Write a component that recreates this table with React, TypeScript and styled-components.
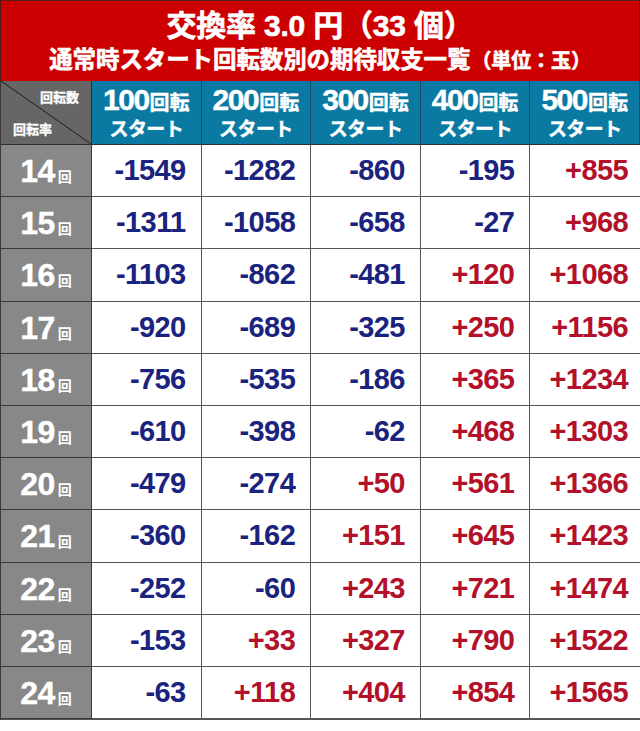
import React from "react";
import styled, { createGlobalStyle } from "styled-components";

const GlobalStyle = createGlobalStyle`
  html, body {
    margin: 0;
    padding: 0;
    background: #ffffff;
  }
  body {
    font-family: "Liberation Sans", "Noto Sans CJK JP", sans-serif;
  }
`;

const starts = [100, 200, 300, 400, 500];

const rows: { rate: number; values: number[] }[] = [
  { rate: 14, values: [-1549, -1282, -860, -195, 855] },
  { rate: 15, values: [-1311, -1058, -658, -27, 968] },
  { rate: 16, values: [-1103, -862, -481, 120, 1068] },
  { rate: 17, values: [-920, -689, -325, 250, 1156] },
  { rate: 18, values: [-756, -535, -186, 365, 1234] },
  { rate: 19, values: [-610, -398, -62, 468, 1303] },
  { rate: 20, values: [-479, -274, 50, 561, 1366] },
  { rate: 21, values: [-360, -162, 151, 645, 1423] },
  { rate: 22, values: [-252, -60, 243, 721, 1474] },
  { rate: 23, values: [-153, 33, 327, 790, 1522] },
  { rate: 24, values: [-63, 118, 404, 854, 1565] },
];

const format = (v: number) => (v > 0 ? `+${v}` : `${v}`);

const App: React.FC = () => {
  return (
    <Page>
      <GlobalStyle />
      <TitleBox>
        <MainTitle>交換率 3.0 円（33 個）</MainTitle>
        <SubTitle>
          通常時スタート回転数別の期待収支一覧
          <Unit>（単位：玉）</Unit>
        </SubTitle>
      </TitleBox>
      <Table>
        <Corner>
          <CornerTop>回転数</CornerTop>
          <CornerBottom>回転率</CornerBottom>
        </Corner>
        {starts.map((s) => (
          <HeadCell key={s}>
            <HeadLine>
              <HeadNum>{s}</HeadNum>
              <HeadKanji>回転</HeadKanji>
            </HeadLine>
            <HeadSub>スタート</HeadSub>
          </HeadCell>
        ))}
        {rows.map((r) => (
          <React.Fragment key={r.rate}>
            <RateCell>
              <RateNum>{r.rate}</RateNum>
              <RateUnit>回</RateUnit>
            </RateCell>
            {r.values.map((v, i) => (
              <ValueCell key={i} $plus={v > 0}>
                {format(v)}
              </ValueCell>
            ))}
          </React.Fragment>
        ))}
      </Table>
    </Page>
  );
};

const Page = styled.div`
  width: 640px;
  height: 731px;
  background: #ffffff;
  overflow: hidden;
`;

const TitleBox = styled.div`
  height: 81px;
  box-sizing: border-box;
  background: #cc0000;
  border: 1px solid #5a1a1a;
  border-bottom: none;
  display: flex;
  flex-direction: column;
  align-items: center;
  justify-content: center;
  padding-top: 3px;
  color: #ffffff;
  font-weight: bold;
  -webkit-text-stroke: 0.6px #ffffff;
`;

const MainTitle = styled.div`
  font-size: 30px;
  line-height: 36px;
  letter-spacing: -0.2px;
`;

const SubTitle = styled.div`
  font-size: 23.5px;
  line-height: 32px;
  letter-spacing: -0.1px;
  display: flex;
  align-items: baseline;
`;

const Unit = styled.span`
  font-size: 20px;
  margin-left: 1px;
`;

const Table = styled.div`
  display: grid;
  grid-template-columns: 91px repeat(5, 1fr);
  grid-template-rows: 64px;
  grid-auto-rows: 52.2px;
  border-left: 1px solid #3a3a3a;
  border-bottom: 1px solid #555555;
`;

const Corner = styled.div`
  position: relative;
  background-color: #666666;
  background-image: linear-gradient(
    to top right,
    transparent calc(50% - 0.8px),
    #1a1a1a 50%,
    transparent calc(50% + 0.8px)
  );
  border-right: 1px solid #2e2e2e;
  border-bottom: 1px solid #2e2e2e;
  color: #ffffff;
  font-size: 13px;
  font-weight: bold;
  -webkit-text-stroke: 0.3px #ffffff;
`;

const CornerTop = styled.span`
  position: absolute;
  top: 6px;
  right: 12px;
`;

const CornerBottom = styled.span`
  position: absolute;
  bottom: 6px;
  left: 12px;
`;

const HeadCell = styled.div`
  background: #0a7aa3;
  border-right: 1px solid #1a4a66;
  border-bottom: 1px solid #2e2e2e;
  color: #ffffff;
  font-weight: bold;
  -webkit-text-stroke: 0.4px #ffffff;
  display: flex;
  flex-direction: column;
  align-items: center;
  justify-content: center;
  padding-top: 2px;
  &:last-of-type {
    border-right: none;
  }
`;

const HeadLine = styled.div`
  display: flex;
  align-items: baseline;
  line-height: 28px;
`;

const HeadNum = styled.span`
  font-size: 30px;
  letter-spacing: -1.5px;
`;

const HeadKanji = styled.span`
  font-size: 20px;
  margin-left: 1px;
`;

const HeadSub = styled.div`
  font-size: 19px;
  line-height: 25px;
  letter-spacing: -0.6px;
`;

const RateCell = styled.div`
  background: #888888;
  border-right: 1px solid #3a3a3a;
  border-bottom: 1px solid #3a3a3a;
  color: #ffffff;
  font-weight: bold;
  display: flex;
  align-items: baseline;
  justify-content: center;
  padding-top: 9px;
  box-sizing: border-box;
`;

const RateNum = styled.span`
  font-size: 32px;
  line-height: 34px;
  letter-spacing: -0.5px;
  -webkit-text-stroke: 0.4px #ffffff;
`;

const RateUnit = styled.span`
  font-size: 14px;
  margin-left: 3px;
`;

const ValueCell = styled.div<{ $plus: boolean }>`
  background: #ffffff;
  border-right: 1px solid #555555;
  border-bottom: 1px solid #555555;
  color: ${(p) => (p.$plus ? "#b3102a" : "#1a237e")};
  font-size: 29px;
  font-weight: bold;
  letter-spacing: -0.6px;
  display: flex;
  align-items: center;
  justify-content: flex-end;
  padding-right: 15px;
  &:nth-child(6n) {
    border-right: none;
    padding-right: 12px;
  }
`;

export default App;
